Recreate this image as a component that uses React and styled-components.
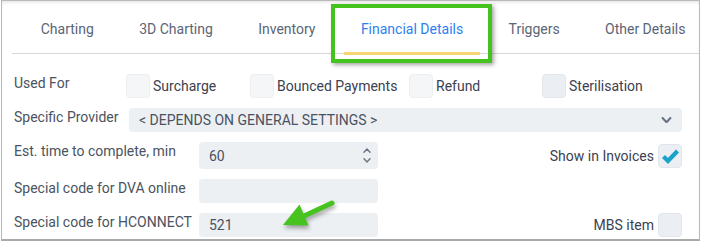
import styled, { createGlobalStyle } from 'styled-components';

const GlobalStyle = createGlobalStyle`
  html, body {
    margin: 0;
    padding: 0;
    background: #ffffff;
    font-family: Roboto, "Liberation Sans", sans-serif;
  }
  * { box-sizing: border-box; }
`;

const Page = styled.div`
  position: relative;
  width: 701px;
  height: 242px;
  overflow: hidden;
`;

const Frame = styled.div`
  margin-left: 1px;
  width: 699px;
  height: 241px;
  border: 1px solid #b9b9b9;
  border-bottom: 2px solid #a9a9a9;
  box-shadow: inset 0 3px 4px -2px rgba(0, 0, 0, 0.12);
  background: #fff;
  overflow: hidden;
`;

const TabBar = styled.div`
  display: flex;
  margin-left: 10px;
  padding-left: 6px;
  height: 53px;
  border-bottom: 1px solid #d8d8d8;
`;

const Tab = styled.div`
  position: relative;
  display: flex;
  align-items: center;
  padding: 3px 22.7px 0;
  font-size: 14px;
  color: ${(p) => (p.$active ? '#2d7ff0' : '#5b6576')};
  white-space: nowrap;

  &::after {
    content: '';
    display: ${(p) => (p.$active ? 'block' : 'none')};
    position: absolute;
    left: 6px;
    right: 6px;
    bottom: -2px;
    height: 3px;
    background: #f7d676;
  }
`;

const Form = styled.div`
  display: flex;
  flex-direction: column;
  gap: 10px;
  padding: 20px 17px 0 12px;
`;

const Row = styled.div`
  display: flex;
  align-items: center;
  height: ${(p) => p.$h || 24}px;
`;

const Label = styled.div`
  flex: none;
  width: ${(p) => p.$w}px;
  align-self: flex-start;
  line-height: 18px;
  font-size: 14px;
  color: #4a5361;
  white-space: nowrap;
`;

const Option = styled.label`
  display: flex;
  align-items: center;
  gap: 3px;
  width: ${(p) => (p.$w ? `${p.$w}px` : 'auto')};
  font-size: 14px;
  color: #3b4150;
  white-space: nowrap;
`;

const Box = styled.span`
  flex: none;
  display: flex;
  align-items: center;
  justify-content: center;
  width: 24px;
  height: 24px;
  border-radius: 4px;
  border: 1px solid ${(p) => (p.$tone === 'dark' ? '#e2e6eb' : '#eceef1')};
  background: ${(p) => (p.$tone === 'dark' ? '#ebeef2' : '#f5f6f8')};
`;

const Select = styled.div`
  flex: 1;
  display: flex;
  align-items: center;
  justify-content: space-between;
  height: 24px;
  padding: 0 10px;
  border-radius: 4px;
  background: #edf0f3;
  font-size: 14px;
  color: #4a5262;
`;

const Field = styled.div`
  flex: none;
  display: flex;
  align-items: center;
  justify-content: space-between;
  width: 179px;
  height: ${(p) => p.$h || 24}px;
  padding: 0 6px 0 10px;
  border-radius: 4px;
  background: #edf0f3;
  font-size: 14px;
  color: #4a5262;
`;

const Spinner = styled.div`
  display: flex;
  flex-direction: column;
  gap: 5px;
  margin-right: 1px;
`;

const RightCheck = styled.label`
  margin-left: auto;
  display: flex;
  align-items: center;
  gap: 4px;
  font-size: 14px;
  color: #3b4150;
  white-space: nowrap;
`;

const Highlight = styled.div`
  position: absolute;
  left: 331px;
  top: 4px;
  width: 161px;
  height: 59px;
  border: 4px solid #45c21e;
  box-shadow: 2px 2px 4px rgba(0, 0, 0, 0.35);
  pointer-events: none;
`;

const Arrow = styled.svg`
  position: absolute;
  left: 270px;
  top: 195px;
  overflow: visible;
  filter: drop-shadow(1px 3px 2px rgba(0, 0, 0, 0.35));
  pointer-events: none;
`;

const Chevron = ({ up, size = 8, color = '#687385', width = 1.4 }) => (
  <svg width={size} height={size / 2 + 1} viewBox="0 0 8 5">
    <path
      d={up ? 'M1 4.2 L4 1 L7 4.2' : 'M1 0.8 L4 4 L7 0.8'}
      fill="none"
      stroke={color}
      strokeWidth={width}
      strokeLinecap="round"
      strokeLinejoin="round"
    />
  </svg>
);

const Tick = () => (
  <svg width="19" height="16" viewBox="0 0 19 16">
    <path d="M2.5 8.5 L7 13 L16.5 3" fill="none" stroke="#18a3c8" strokeWidth="4.2" strokeLinejoin="miter" />
  </svg>
);

const tabs = ['Charting', '3D Charting', 'Inventory', 'Financial Details', 'Triggers', 'Other Details'];

export default function App() {
  return (
    <Page>
      <GlobalStyle />
      <Frame>
        <TabBar>
          {tabs.map((t) => (
            <Tab key={t} $active={t === 'Financial Details'}>
              {t}
            </Tab>
          ))}
        </TabBar>

        <Form>
          <Row>
            <Label $w={112}>Used For</Label>
            <Option $w={124}>
              <Box />
              Surcharge
            </Option>
            <Option $w={159}>
              <Box />
              Bounced Payments
            </Option>
            <Option $w={133}>
              <Box />
              Refund
            </Option>
            <Option>
              <Box $tone="dark" />
              Sterilisation
            </Option>
          </Row>

          <Row>
            <Label $w={115}>Specific Provider</Label>
            <Select>
              <span>&lt; DEPENDS ON GENERAL SETTINGS &gt;</span>
              <Chevron size={11} width={1.6} />
            </Select>
          </Row>

          <Row $h={27}>
            <Label $w={185}>Est. time to complete, min</Label>
            <Field $h={27}>
              <span>60</span>
              <Spinner>
                <Chevron up />
                <Chevron />
              </Spinner>
            </Field>
            <RightCheck>
              Show in Invoices
              <Box $tone="dark">
                <Tick />
              </Box>
            </RightCheck>
          </Row>

          <Row>
            <Label $w={185}>Special code for DVA online</Label>
            <Field />
          </Row>

          <Row>
            <Label $w={185}>Special code for HCONNECT</Label>
            <Field>
              <span>521</span>
            </Field>
            <RightCheck>
              MBS item
              <Box $tone="dark" />
            </RightCheck>
          </Row>
        </Form>
      </Frame>

      <Highlight />
      <Arrow width="70" height="40" viewBox="270 195 70 40">
        <line x1="332" y1="203" x2="303" y2="216.5" stroke="#46c31f" strokeWidth="5" strokeLinecap="round" />
        <polygon points="299.5,204.5 283,225 308.5,225.5" fill="#46c31f" />
      </Arrow>
    </Page>
  );
}
